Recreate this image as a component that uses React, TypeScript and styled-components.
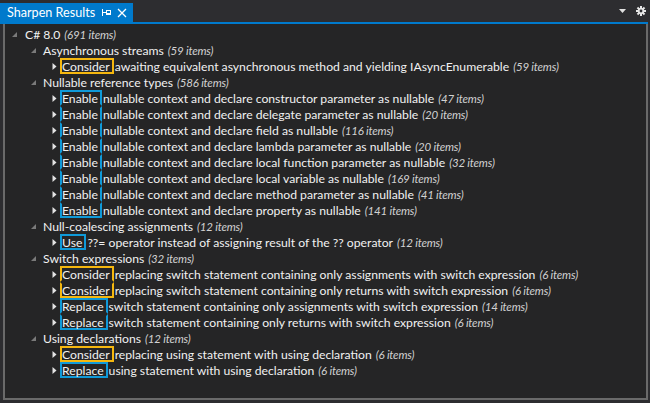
import React from "react";
import styled, { createGlobalStyle } from "styled-components";

const Global = createGlobalStyle`
  html, body { margin: 0; padding: 0; background: #2d2d30; }
  body { font-family: Lato, "Noto Sans", sans-serif; }
`;

const Window = styled.div`
  width: 650px;
  height: 403px;
  display: flex;
  flex-direction: column;
  background: #2d2d30;
  color: #f1f1f1;
  font-size: 12.2px;
  overflow: hidden;
`;

const Header = styled.div`
  height: 22px;
  display: flex;
  align-items: flex-end;
  border-bottom: 2px solid #007acc;
  margin-right: 2px;
`;

const Tab = styled.div`
  width: 133px;
  height: 19px;
  background: #007acc;
  display: flex;
  align-items: center;
  padding-left: 7px;
  box-sizing: border-box;
  color: #ffffff;
`;

const TabTitle = styled.span`
  flex: 1;
  font-size: 12.6px;
  white-space: nowrap;
`;

const TabIcon = styled.span<{ $w: number; $mr: number }>`
  display: flex;
  flex: none;
  width: ${(p) => p.$w}px;
  margin-right: ${(p) => p.$mr}px;
  align-items: center;
  justify-content: center;
`;

const Spacer = styled.div`
  flex: 1;
`;

const Tools = styled.div`
  display: flex;
  align-items: center;
  height: 22px;
  gap: 10px;
  padding-right: 2px;
`;

const Panel = styled.div`
  flex: 1;
  margin: 0 2px 3px 3px;
  background: #252526;
  border: 2px solid #6a6a6a;
  border-top: none;
  padding-top: 2px;
`;

const Row = styled.div<{ $level: number }>`
  height: 16px;
  display: flex;
  align-items: center;
  padding-left: ${(p) => 7 + p.$level * 19}px;
  white-space: nowrap;
`;

const Expander = styled.span<{ $w: number; $ml: number }>`
  display: flex;
  align-items: center;
  width: ${(p) => p.$w}px;
  padding-left: ${(p) => p.$ml}px;
  height: 16px;
  flex: none;
`;

const Count = styled.span`
  font-style: italic;
  font-size: 11.5px;
  letter-spacing: -0.2px;
  color: #d2d2d2;
  margin-left: 4px;
`;

const Verb = styled.span<{ $color: string; $first: boolean; $last: boolean }>`
  box-sizing: border-box;
  height: 16px;
  display: flex;
  align-items: center;
  border-left: 2px solid ${(p) => p.$color};
  border-right: 2px solid ${(p) => p.$color};
  border-top: 2px solid ${(p) => (p.$first ? p.$color : "transparent")};
  border-bottom: 2px solid ${(p) => (p.$last ? p.$color : "transparent")};
  padding-right: 2px;
`;

const Rest = styled.span`
  margin-left: 1px;
`;

const YELLOW = "#f5b70f";
const BLUE = "#0f9ad9";

type Item = { verb: string; color: string; rest: string; count: string };
type Group = { label: string; count: string; items: Item[] };

const en = (rest: string, count: string): Item => ({
  verb: "Enable",
  color: BLUE,
  rest: "nullable context and declare " + rest + " as nullable",
  count,
});

const groups: Group[] = [
  {
    label: "Asynchronous streams",
    count: "59 items",
    items: [
      {
        verb: "Consider",
        color: YELLOW,
        rest: "awaiting equivalent asynchronous method and yielding IAsyncEnumerable",
        count: "59 items",
      },
    ],
  },
  {
    label: "Nullable reference types",
    count: "586 items",
    items: [
      en("constructor parameter", "47 items"),
      en("delegate parameter", "20 items"),
      en("field", "116 items"),
      en("lambda parameter", "20 items"),
      en("local function parameter", "32 items"),
      en("local variable", "169 items"),
      en("method parameter", "41 items"),
      en("property", "141 items"),
    ],
  },
  {
    label: "Null-coalescing assignments",
    count: "12 items",
    items: [
      {
        verb: "Use",
        color: BLUE,
        rest: "??= operator instead of assigning result of the ?? operator",
        count: "12 items",
      },
    ],
  },
  {
    label: "Switch expressions",
    count: "32 items",
    items: [
      {
        verb: "Consider",
        color: YELLOW,
        rest: "replacing switch statement containing only assignments with switch expression",
        count: "6 items",
      },
      {
        verb: "Consider",
        color: YELLOW,
        rest: "replacing switch statement containing only returns with switch expression",
        count: "6 items",
      },
      {
        verb: "Replace",
        color: BLUE,
        rest: "switch statement containing only assignments with switch expression",
        count: "14 items",
      },
      {
        verb: "Replace",
        color: BLUE,
        rest: "switch statement containing only returns with switch expression",
        count: "6 items",
      },
    ],
  },
  {
    label: "Using declarations",
    count: "12 items",
    items: [
      {
        verb: "Consider",
        color: YELLOW,
        rest: "replacing using statement with using declaration",
        count: "6 items",
      },
      {
        verb: "Replace",
        color: BLUE,
        rest: "using statement with using declaration",
        count: "6 items",
      },
    ],
  },
];

const ExpandedGlyph = () => (
  <svg width="5" height="5" viewBox="0 0 5 5">
    <polygon points="5,0 5,5 0,5" fill="#7a7a7a" />
  </svg>
);

const CollapsedGlyph = () => (
  <svg width="5" height="7" viewBox="0 0 5 7">
    <polygon points="0.5,0 4.5,3.5 0.5,7" fill="#e4e4e4" />
  </svg>
);

const PinIcon = () => (
  <svg width="9" height="7" viewBox="0 0 9 7">
    <rect x="0" y="0" width="1" height="7" fill="#fff" />
    <rect x="1" y="3" width="3" height="1" fill="#fff" />
    <rect x="4.5" y="1.5" width="4" height="4" fill="none" stroke="#fff" strokeWidth="1" />
    <rect x="4" y="4" width="5" height="1" fill="#fff" />
  </svg>
);

const CloseIcon = () => (
  <svg width="10" height="10" viewBox="0 0 10 10">
    <path d="M1 1 L9 9 M9 1 L1 9" stroke="#fff" strokeWidth="1.3" />
  </svg>
);

const DropIcon = () => (
  <svg width="7" height="4" viewBox="0 0 7 4">
    <polygon points="0,0 7,0 3.5,4" fill="#e0e0e0" />
  </svg>
);

const GearIcon = () => {
  const teeth = [];
  for (let i = 0; i < 8; i++) {
    teeth.push(
      <rect
        key={i}
        x="4"
        y="0"
        width="2"
        height="3"
        fill="#e6e6e6"
        transform={`rotate(${i * 45} 5 5)`}
      />
    );
  }
  return (
    <svg width="10" height="10" viewBox="0 0 10 10">
      {teeth}
      <circle cx="5" cy="5" r="3.2" fill="#e6e6e6" />
      <circle cx="5" cy="5" r="1.4" fill="#2d2d30" />
    </svg>
  );
};

const LeafRow = ({ item, first, last }: { item: Item; first: boolean; last: boolean }) => (
  <Row $level={2}>
    <Expander $w={8} $ml={2}>
      <CollapsedGlyph />
    </Expander>
    <Verb $color={item.color} $first={first} $last={last}>
      {item.verb}
    </Verb>
    <Rest>{item.rest}</Rest>
    <Count>({item.count})</Count>
  </Row>
);

export default function App() {
  return (
    <>
      <Global />
      <Window>
        <Header>
          <Tab>
            <TabTitle>Sharpen Results</TabTitle>
            <TabIcon $w={10} $mr={6}>
              <PinIcon />
            </TabIcon>
            <TabIcon $w={10} $mr={6}>
              <CloseIcon />
            </TabIcon>
          </Tab>
          <Spacer />
          <Tools>
            <DropIcon />
            <GearIcon />
          </Tools>
        </Header>
        <Panel>
          <Row $level={0}>
            <Expander $w={13} $ml={0}>
              <ExpandedGlyph />
            </Expander>
            C# 8.0<Count>(691 items)</Count>
          </Row>
          {groups.map((g) => (
            <React.Fragment key={g.label}>
              <Row $level={1}>
                <Expander $w={12} $ml={0}>
                  <ExpandedGlyph />
                </Expander>
                {g.label}
                <Count>({g.count})</Count>
              </Row>
              {g.items.map((it, i) => (
                <LeafRow
                  key={i}
                  item={it}
                  first={i === 0 || g.items[i - 1].verb !== it.verb}
                  last={i === g.items.length - 1 || g.items[i + 1].verb !== it.verb}
                />
              ))}
            </React.Fragment>
          ))}
        </Panel>
      </Window>
    </>
  );
}
